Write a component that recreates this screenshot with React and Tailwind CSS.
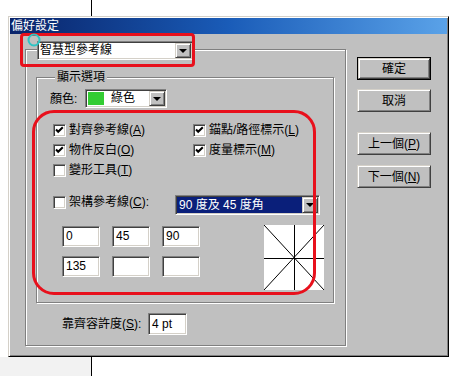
const sunken =
  'border border-t-[#808080] border-l-[#808080] border-b-white border-r-white shadow-[inset_1px_1px_0_#404040,inset_-1px_-1px_0_#d4d0c8]';
const raised =
  'border border-t-[#d4d0c8] border-l-[#d4d0c8] border-b-[#404040] border-r-[#404040] shadow-[inset_1px_1px_0_#fff,inset_-1px_-1px_0_#808080]';
const etched = 'border border-[#808080] shadow-[inset_1px_1px_0_#fff,1px_1px_0_#fff]';

const ArrowButton = () => (
  <div className={`flex h-full w-[16px] items-center justify-center bg-[#c0c0c0] ${raised}`}>
    <div className="h-0 w-0 border-x-[4px] border-t-[4px] border-x-transparent border-t-black" />
  </div>
);

const Checkbox = ({ checked }) => (
  <div className={`h-[13px] w-[13px] shrink-0 bg-white ${sunken}`}>
    {checked && (
      <svg width="11" height="11" viewBox="0 0 11 11">
        <path d="M2 4.5 L4.2 6.8 L8.8 2.2" stroke="black" strokeWidth="2" fill="none" />
      </svg>
    )}
  </div>
);

const CheckRow = ({ checked, label, hot }) => (
  <div className="flex h-[13px] items-center gap-[3px]">
    <Checkbox checked={checked} />
    <span className="whitespace-nowrap leading-[13px]">
      {label}(<span className="underline">{hot}</span>)
    </span>
  </div>
);

const Field = ({ value }) => (
  <div className={`h-[21px] w-[38px] bg-white pl-[3px] leading-[19px] ${sunken}`}>{value}</div>
);

const Button = ({ children, isDefault, className = '' }) => (
  <div
    className={`w-[74px] ${isDefault ? 'border border-black' : ''} ${className}`}
  >
    <div
      className={`flex ${isDefault ? 'h-[21px]' : 'h-[23px]'} items-center justify-center bg-[#c0c0c0] ${raised}`}
    >
      {children}
    </div>
  </div>
);

export default function App() {
  return (
    <div className="h-[376px] w-[468px] overflow-hidden bg-white font-['Liberation_Sans','Noto_Sans_CJK_TC',sans-serif] text-[12px] text-black">
      <div className="h-[16px] pl-[91px]">
        <div className="h-full w-px bg-black" />
      </div>

      <div className="pl-[8px]">
        <div className="relative flex h-[341px] w-[441px] flex-col border border-t-[#d4d0c8] border-l-[#d4d0c8] border-r-black border-b-black bg-[#c0c0c0] p-[1px] shadow-[inset_1px_1px_0_#fff,inset_-1px_-1px_0_#808080]">
          <div className="h-[16px] bg-linear-to-r from-[#0a246a] via-[#1a5cb8] to-[#5aa2e8] pl-[1px] leading-[16px] text-white">
            偏好設定
          </div>

          <div className="flex">
            <div className={`ml-[15px] mt-[15px] h-[297px] w-[321px] ${etched}`}>
              <div className="-mt-[9px] ml-[11px] flex">
                <div className={`flex h-[19px] w-[156px] items-center bg-white p-[1px] ${sunken}`}>
                  <span className="flex-1 pl-[1px] leading-[15px]">智慧型參考線</span>
                  <ArrowButton />
                </div>
              </div>

              <div className={`ml-[10px] mt-[17px] h-[226px] w-[298px] ${etched}`}>
                <div className="-mt-[8px] ml-[18px] w-fit bg-[#c0c0c0] px-[2px] leading-[15px]">顯示選項</div>

                <div className="ml-[13px] mt-[4px] flex items-center">
                  <span className="w-[35px]">顏色:</span>
                  <div className={`flex h-[19px] w-[82px] items-center bg-white p-[1px] ${sunken}`}>
                    <div className="ml-[1px] h-[13px] w-[16px] bg-[#33cc33]" />
                    <span className="flex-1 pl-[7px] leading-[15px]">綠色</span>
                    <ArrowButton />
                  </div>
                </div>

                <div className="ml-[16px] mt-[16px] grid grid-cols-[140px_auto] gap-y-[7px]">
                  <CheckRow checked label="對齊參考線" hot="A" />
                  <CheckRow checked label="錨點/路徑標示" hot="L" />
                  <CheckRow checked label="物件反白" hot="O" />
                  <CheckRow checked label="度量標示" hot="M" />
                  <CheckRow label="變形工具" hot="T" />
                </div>

                <div className="ml-[16px] mt-[18px] flex items-start">
                  <div className="mt-[1px] flex w-[122px] items-center gap-[3px]">
                    <Checkbox />
                    <span className="whitespace-nowrap leading-[13px]">
                      架構參考線(<span className="underline">C</span>):
                    </span>
                  </div>
                  <div className={`flex h-[20px] w-[145px] items-center bg-white p-[1px] ${sunken}`}>
                    <span className="h-full flex-1 bg-[#0a1f7a] pl-[2px] leading-[16px] text-white">
                      90 度及 45 度角
                    </span>
                    <ArrowButton />
                  </div>
                </div>

                <div className="ml-[25px] mt-[11px] flex items-start">
                  <div className="grid grid-cols-[38px_38px_38px] gap-x-[12px] gap-y-[9px]">
                    <Field value="0" />
                    <Field value="45" />
                    <Field value="90" />
                    <Field value="135" />
                    <Field value="" />
                    <Field value="" />
                  </div>
                  <svg className="-mt-[1px] ml-[64px]" width="60" height="65" viewBox="0 0 60 65">
                    <rect x="0" y="0" width="60" height="65" fill="white" />
                    <line x1="30.5" y1="0" x2="30.5" y2="65" stroke="black" strokeWidth="1" />
                    <line x1="0" y1="33.5" x2="60" y2="33.5" stroke="black" strokeWidth="1" />
                    <line x1="0" y1="0" x2="60" y2="65" stroke="black" strokeWidth="1" />
                    <line x1="60" y1="0" x2="0" y2="65" stroke="black" strokeWidth="1" />
                  </svg>
                </div>
              </div>

              <div className="ml-[36px] mt-[10px] flex items-center">
                <span className="w-[86px] whitespace-nowrap">
                  靠齊容許度(<span className="underline">S</span>):
                </span>
                <div className={`h-[22px] w-[39px] bg-white pl-[3px] leading-[20px] ${sunken}`}>4 pt</div>
              </div>
            </div>

            <div className="ml-[11px] mt-[23px] flex flex-col">
              <Button isDefault>確定</Button>
              <Button className="mt-[9px]">取消</Button>
              <Button className="mt-[20px]">
                上一個(<span className="underline">P</span>)
              </Button>
              <Button className="mt-[10px]">
                下一個(<span className="underline">N</span>)
              </Button>
            </div>
          </div>

          {/* red annotation marks drawn over the dialog */}
          <div className="pointer-events-none absolute left-[11px] top-[16px] h-[34px] w-[175px] rounded-[4px] border-[3px] border-[#e8101c]" />
          <div className="pointer-events-none absolute left-[23px] top-[93px] h-[185px] w-[284px] rounded-[22px] border-[3px] border-[#e8101c]" />
          <svg className="pointer-events-none absolute left-[17px] top-[15px]" width="16" height="16" viewBox="0 0 16 16">
            <circle cx="8" cy="8" r="5.5" stroke="#2ec4c4" strokeWidth="2" fill="none" />
          </svg>
        </div>
      </div>

      <div className="flex h-[19px]">
        <div className="w-[91px] bg-[#f2f2f2]" />
        <div className="w-px bg-black" />
      </div>
    </div>
  );
}
